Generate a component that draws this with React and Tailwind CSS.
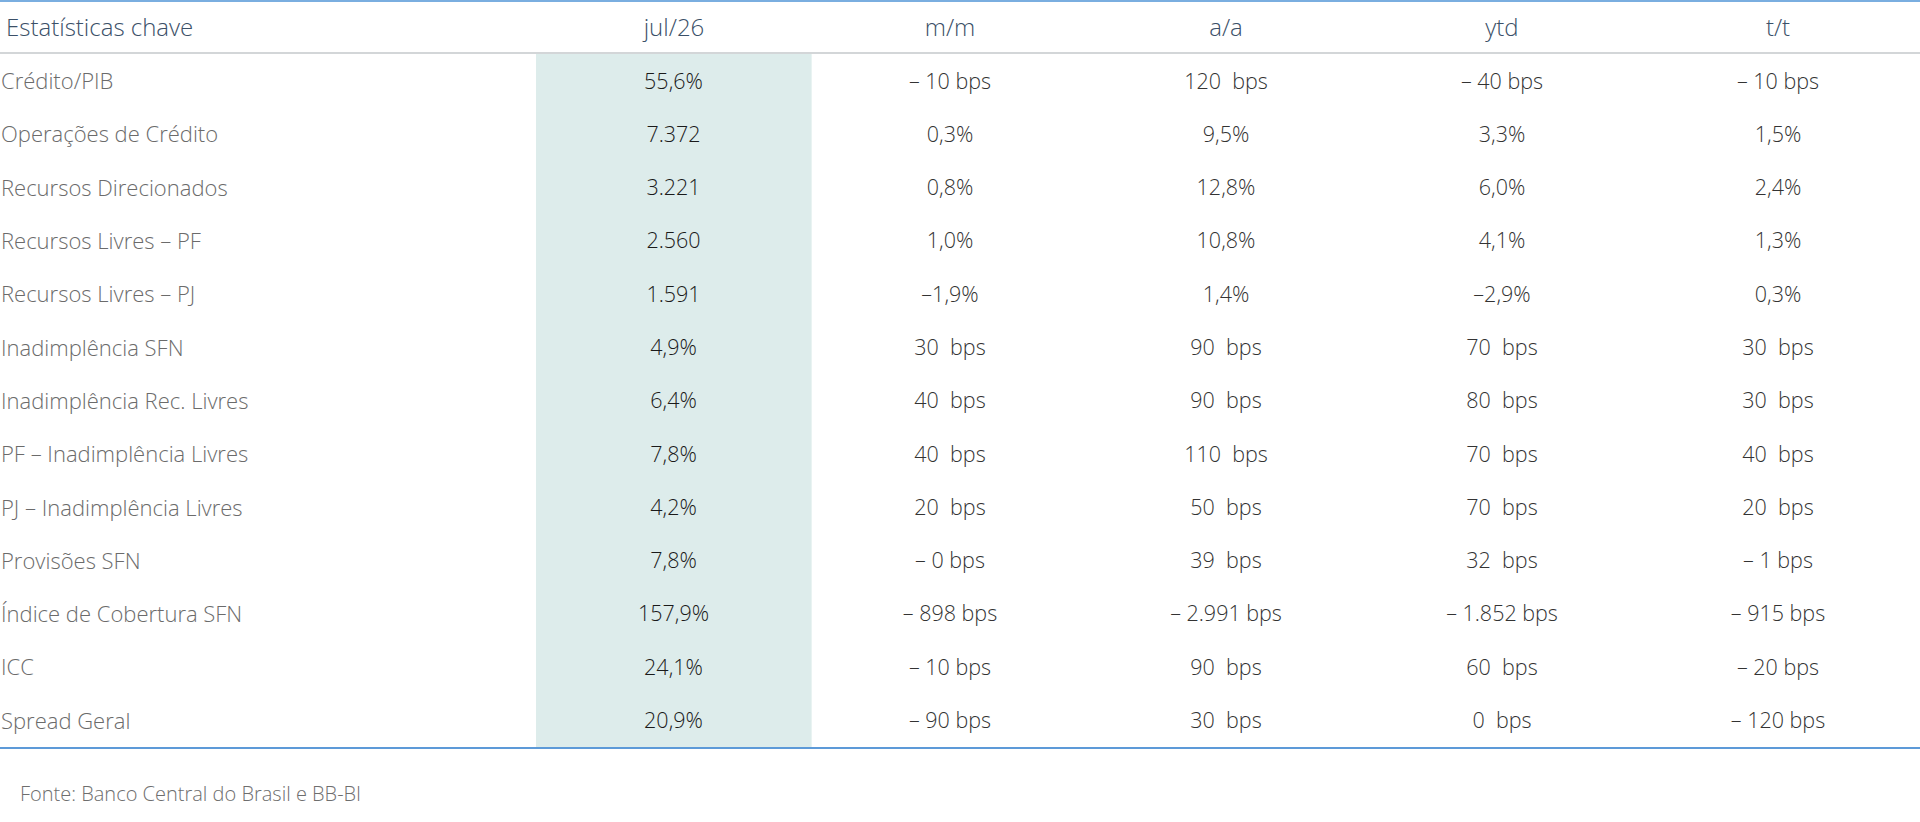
const rows = [
  ["Crédito/PIB", "55,6%", "– 10 bps", "120  bps", "– 40 bps", "– 10 bps"],
  ["Operações de Crédito", "7.372", "0,3%", "9,5%", "3,3%", "1,5%"],
  ["Recursos Direcionados", "3.221", "0,8%", "12,8%", "6,0%", "2,4%"],
  ["Recursos Livres – PF", "2.560", "1,0%", "10,8%", "4,1%", "1,3%"],
  ["Recursos Livres – PJ", "1.591", "–1,9%", "1,4%", "–2,9%", "0,3%"],
  ["Inadimplência SFN", "4,9%", "30  bps", "90  bps", "70  bps", "30  bps"],
  ["Inadimplência Rec. Livres", "6,4%", "40  bps", "90  bps", "80  bps", "30  bps"],
  ["PF – Inadimplência Livres", "7,8%", "40  bps", "110  bps", "70  bps", "40  bps"],
  ["PJ – Inadimplência Livres", "4,2%", "20  bps", "50  bps", "70  bps", "20  bps"],
  ["Provisões SFN", "7,8%", "– 0 bps", "39  bps", "32  bps", "– 1 bps"],
  ["Índice de Cobertura SFN", "157,9%", "– 898 bps", "– 2.991 bps", "– 1.852 bps", "– 915 bps"],
  ["ICC", "24,1%", "– 10 bps", "90  bps", "60  bps", "– 20 bps"],
  ["Spread Geral", "20,9%", "– 90 bps", "30  bps", "0  bps", "– 120 bps"],
];

const headers = ["jul/26", "m/m", "a/a", "ytd", "t/t"];

export default function App() {
  return (
    <div className="w-[1920px] h-[822px] bg-white font-['Open_Sans',sans-serif] font-light">
      <div className="border-t-2 border-[#7aaee0]">
        {/* header */}
        <div className="grid grid-cols-[536px_repeat(5,276px)] h-[52px] items-center border-b-2 border-[#d3d6d8] text-[24px] text-[#3b5068]">
          <div className="pl-[6px] whitespace-pre">Estatísticas chave</div>
          {headers.map((h) => (
            <div key={h} className="text-center">{h}</div>
          ))}
        </div>

        {/* body */}
        <div className="border-b-2 border-[#5d9ad8]">
          {rows.map((r, i) => (
            <div key={i} className="grid grid-cols-[536px_repeat(5,276px)] h-[53.3px] text-[22px]">
              <div className="flex items-center pl-px text-[#6b6b6b]">{r[0]}</div>
              <div className="flex items-center justify-center bg-[#ddeceb] border-r border-[#e9f3f2] text-[21.5px] text-[#1a1a1a]">
                {r[1]}
              </div>
              {r.slice(2).map((v, j) => (
                <div key={j} className="flex items-center justify-center text-[21.5px] text-[#333] whitespace-pre">
                  {v}
                </div>
              ))}
            </div>
          ))}
        </div>

        <div className="pl-[20px] pt-[30px] text-[20px] text-[#6e6e6e]">
          Fonte: Banco Central do Brasil e BB-BI
        </div>
      </div>
    </div>
  );
}
